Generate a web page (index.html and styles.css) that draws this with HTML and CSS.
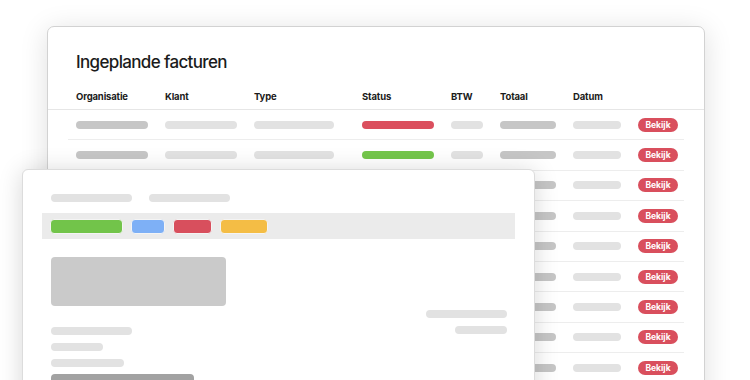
FILE: index.html
```html
<!DOCTYPE html>
<html lang="nl">
<head>
  <meta charset="UTF-8" />
  <meta name="viewport" content="width=device-width, initial-scale=1" />
  <title>Ingeplande facturen</title>
  <link rel="stylesheet" href="styles.css">
</head>
<body>
  <div class="stage">

    <div class="tabel-kaart">
      <h1 class="titel">Ingeplande facturen</h1>

      <div class="kop rij-grid">
        <span>Organisatie</span>
        <span>Klant</span>
        <span>Type</span>
        <span>Status</span>
        <span>BTW</span>
        <span>Totaal</span>
        <span>Datum</span>
        <span></span>
      </div>

      <div class="rijen" id="rijen"></div>
    </div>

    <div class="factuur">
      <div class="factuur-kop">
        <span class="pil licht w81"></span>
        <span class="pil licht w81"></span>
      </div>

      <div class="labelbalk">
        <span class="chip groen"></span>
        <span class="chip blauw"></span>
        <span class="chip rood"></span>
        <span class="chip geel"></span>
      </div>

      <div class="factuur-body">
        <div class="links">
          <div class="blok"></div>
          <div class="regels">
            <span class="pil licht w81"></span>
            <span class="pil licht w52"></span>
            <span class="pil licht w73"></span>
            <span class="balk-donker"></span>
          </div>
        </div>
        <div class="rechts">
          <span class="pil licht w81"></span>
          <span class="pil licht w52"></span>
        </div>
      </div>
    </div>

  </div>

  <script>
    const rijen = document.getElementById("rijen");
    const statussen = ["rood", "groen", "grijs", "grijs", "grijs", "grijs", "grijs", "grijs", "grijs"];

    statussen.forEach((status) => {
      const rij = document.createElement("div");
      rij.className = "rij rij-grid";
      rij.innerHTML = `
        <span class="pil donker org"></span>
        <span class="pil licht klant"></span>
        <span class="pil licht type"></span>
        <span class="pil status ${status}"></span>
        <span class="pil licht btw"></span>
        <span class="pil donker totaal"></span>
        <span class="pil licht datum"></span>
        <span class="bekijk">Bekijk</span>`;
      rijen.appendChild(rij);
    });
  </script>
</body>
</html>
```

FILE: styles.css
```css
* {
  box-sizing: border-box;
}

body {
  margin: 0;
  background: #ffffff;
  font-family: "Inter", "Noto Sans", sans-serif;
  color: #1b1b1b;
  overflow: hidden;
}

.stage {
  position: relative;
  width: 750px;
  height: 380px;
  overflow: hidden;
}

/* grote kaart met tabel */
.tabel-kaart {
  margin: 26px 0 0 47px;
  width: 658px;
  height: 420px;
  background: #fff;
  border: 1px solid #d2d2d2;
  border-radius: 7px;
  box-shadow: 0 4px 28px rgba(0, 0, 0, 0.13);
}

.titel {
  margin: 0;
  padding: 23px 0 0 28px;
  font-size: 17px;
  font-weight: 500;
  letter-spacing: -0.65px;
  line-height: 24px;
}

.rij-grid {
  display: grid;
  grid-template-columns: 89px 89px 108px 89px 49px 73px 65px 1fr;
  align-items: center;
}

.kop {
  height: 36px;
  padding: 9px 0 0 28px;
  font-size: 9.5px;
  font-weight: 700;
  letter-spacing: -0.15px;
  border-bottom: 1.5px solid #e6e6e6;
}

.rijen {
  margin: 0 20px 0 20px;
}

.rij {
  height: 30.4px;
  padding-left: 8px;
  border-bottom: 1px solid #ededed;
}

.pil {
  display: block;
  height: 8px;
  border-radius: 4px;
}

.donker { background: #c6c6c6; }
.licht { background: #e2e2e2; }

.org { width: 72px; }
.klant { width: 72px; }
.type { width: 80px; }
.status { width: 72px; }
.btw { width: 32px; }
.totaal { width: 56px; }
.datum { width: 48px; }

.status.rood { background: #db4f5e; }
.status.groen { background: #74c64b; }
.status.grijs { background: #c6c6c6; }

.bekijk {
  width: 40px;
  height: 14px;
  border-radius: 7px;
  background: #d94f5d;
  color: #fff;
  font-size: 8.5px;
  font-weight: 700;
  line-height: 14px;
  text-align: center;
}

/* kleine factuur die eroverheen ligt */
.factuur {
  position: absolute;
  left: 22px;
  top: 169px;
  width: 513px;
  height: 240px;
  background: #fff;
  border: 1px solid #dcdcdc;
  border-radius: 6px;
  box-shadow: 0 2px 24px rgba(0, 0, 0, 0.16);
}

.factuur-kop {
  display: flex;
  gap: 17px;
  padding: 24px 0 0 28px;
}

.w81 { width: 81px; }
.w52 { width: 52px; }
.w73 { width: 73px; }

.labelbalk {
  display: flex;
  align-items: center;
  gap: 8px;
  height: 26px;
  margin: 11px 19px 0 19px;
  padding-left: 8px;
  background: #ebebeb;
}

.chip {
  height: 15px;
  border-radius: 4px;
  border: 1px solid #f4f4f4;
}

.chip.groen { width: 73px; background: #72c44a; }
.chip.blauw { width: 34px; background: #7eb0f6; }
.chip.rood { width: 39px; background: #d84f5d; }
.chip.geel { width: 48px; background: #f4bd45; }

.factuur-body {
  display: flex;
  justify-content: space-between;
  padding: 18px 27px 0 28px;
}

.blok {
  width: 175px;
  height: 49px;
  border-radius: 4px;
  background: #cacaca;
}

.regels {
  display: flex;
  flex-direction: column;
  gap: 8px;
  margin-top: 21px;
}

.balk-donker {
  display: block;
  width: 143px;
  height: 12px;
  border-radius: 4px;
  background: #a2a2a2;
  margin-top: -1px;
}

.rechts {
  display: flex;
  flex-direction: column;
  align-items: flex-end;
  gap: 8px;
  padding-top: 53px;
}
```
